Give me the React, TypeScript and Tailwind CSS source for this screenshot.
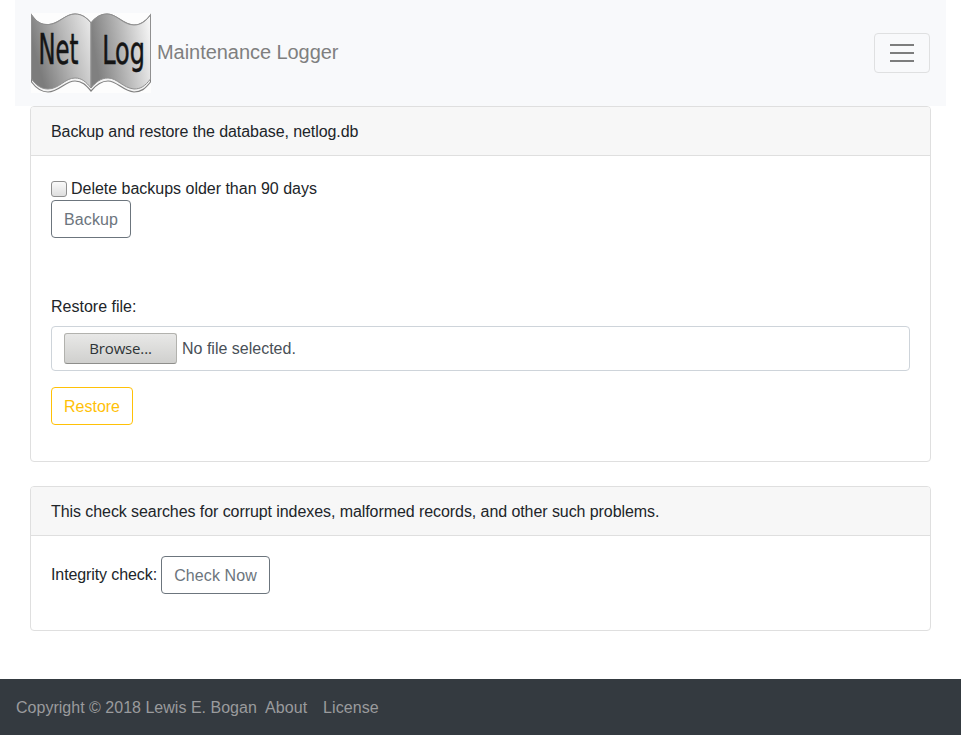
import React from "react";

function Logo() {
  return (
    <svg width="120" height="80" viewBox="0 0 120 80" role="img" aria-label="Net Log" className="block shrink-0">
      <defs>
        <linearGradient id="leftPage" x1="0" y1="0.35" x2="1" y2="0">
          <stop offset="0" stopColor="#7c7c7c" />
          <stop offset="0.5" stopColor="#b8b8b8" />
          <stop offset="1" stopColor="#ececec" />
        </linearGradient>
        <linearGradient id="rightPage" x1="0" y1="0.2" x2="1" y2="0">
          <stop offset="0" stopColor="#808080" />
          <stop offset="0.5" stopColor="#bcbcbc" />
          <stop offset="1" stopColor="#fafafa" />
        </linearGradient>
      </defs>
      <rect width="120" height="80" fill="#fdfdfd" />
      <path d="M.5 2C6 10 11 12 18 11.5C28 11 34 1 44 1C51 1 56 5 60 10C64 5 69 1 76 1C86 1 92 12 103 12C110 12 115 8 119.5 2V69C114 76 110 79 103 79C92 78 86 68 77 68C70 68 65 72 60 78C55 72 51 68 44 68C34 68 28 79 17 79C10 79 5 75 .5 69Z" fill="#f4f4f4" stroke="#808080" strokeWidth="1.2" />
      <path d="M.5 2C6 10 11 12 18 11.5C28 11 34 1 44 1C51 1 56 5 60 10V75C55 69 51 65 44 65C34 65 28 76 17 76C10 76 5 72 .5 66Z" fill="url(#leftPage)" stroke="#909090" strokeWidth="1" />
      <path d="M60 10C64 5 69 1 76 1C86 1 92 12 103 12C110 12 115 8 119.5 2V66C114 73 110 76 103 76C92 75 86 65 77 65C70 65 65 69 60 75Z" fill="url(#rightPage)" stroke="#909090" strokeWidth="1" />
      <g fill="#151515" stroke="#151515" strokeWidth="0.6" fontSize="42" fontFamily="'DejaVu Sans', sans-serif">
        <text transform="translate(7.4 51.2) scale(.542 1)">Net</text>
        <text transform="translate(71.2 51) scale(.57 .94)">Log</text>
      </g>
    </svg>
  );
}

const button = "inline-block h-[38px] rounded-[4px] border pt-px text-center leading-9";

function Card({ title, children, className }: { title: string; children: React.ReactNode; className: string }) {
  return (
    <section className={`rounded-[4px] border border-[#dfdfdf] bg-white ${className}`}>
      <header className="h-[49px] rounded-t-[3px] border-b border-[#dfdfdf] bg-[#f7f7f7] px-5 pt-[13px] tracking-[-0.073px]">{title}</header>
      <div className="p-5">{children}</div>
    </section>
  );
}

export default function App() {
  return (
    <div className="flex h-[735px] flex-col bg-white font-['Liberation_Sans',Arial,sans-serif] text-base leading-6 text-[#212529]">
      <nav className="mx-[15px] flex h-[106px] shrink-0 items-center justify-between bg-[#f8f9fb] px-4">
        <a className="flex items-center gap-1.5 text-xl text-[#7f7f7f]">
          <Logo />
          <span className="-mt-0.5 tracking-[-0.05px]">Maintenance Logger</span>
        </a>
        <button aria-label="Toggle navigation" className="flex h-10 w-14 items-center justify-center rounded-[4px] border border-[#dfe0e1]">
          <svg width="30" height="30" viewBox="0 0 30 30" stroke="#7c7d7d" strokeWidth="2" strokeMiterlimit="10">
            <path d="M3 7h24M3 15h24M3 23h24" />
          </svg>
        </button>
      </nav>
      <main className="mx-[30px] flex grow flex-col gap-6">
        <Card title="Backup and restore the database, netlog.db" className="h-[356px]">
          <label className="flex h-6 items-center gap-1 pt-0.5 tracking-[-0.015px]">
            <input type="checkbox" className="h-4 w-4 appearance-none rounded-[3px] border border-[#8f8f8f] bg-linear-to-b from-[#fafafa] to-[#dedede]" />
            Delete backups older than 90 days
          </label>
          <button className={`${button} w-20 tracking-[0.1px] border-[#6c757d] text-[#6c757d]`}>Backup</button>
          <div className="mt-[57px]">Restore file:</div>
          <div className="mt-[7px] flex h-[45px] items-center rounded-[4px] border border-[#ced4da] px-3 text-[#495057]">
            <button className="mr-[5px] h-[31px] w-[113px] rounded-[3px] border border-[#b2b2ae] border-b-[#8e8e8b] bg-linear-to-b from-[#e8e8e7] to-[#d0d0ce] font-['Open_Sans',sans-serif] text-[15px] leading-[29px] tracking-[-0.15px] text-[#2e3436]">Browse...</button>
            No file selected.
          </div>
          <button className={`${button} mt-4 w-[82px] border-[#ffc107] text-[#ffc107]`}>Restore</button>
        </Card>
        <Card title="This check searches for corrupt indexes, malformed records, and other such problems." className="h-[145px]">
          <div className="flex">
            <span className="w-[110px] pt-[7px] tracking-[-0.1px]">Integrity check:</span>
            <button className={`${button} w-[109px] tracking-[0.1px] border-[#6c757d] text-[#6c757d]`}>Check Now</button>
          </div>
        </Card>
      </main>
      <footer className="flex h-14 shrink-0 items-center bg-[#343a40] px-4 pt-0.5 text-[#9a9b9d]">
        <span className="w-[241px] whitespace-nowrap tracking-[0.015px]">Copyright © 2018 Lewis E. Bogan</span>
        <a className="ml-2 w-[42px] tracking-[0.1px]">About</a>
        <a className="ml-4 tracking-[0.1px]">License</a>
      </footer>
    </div>
  );
}
